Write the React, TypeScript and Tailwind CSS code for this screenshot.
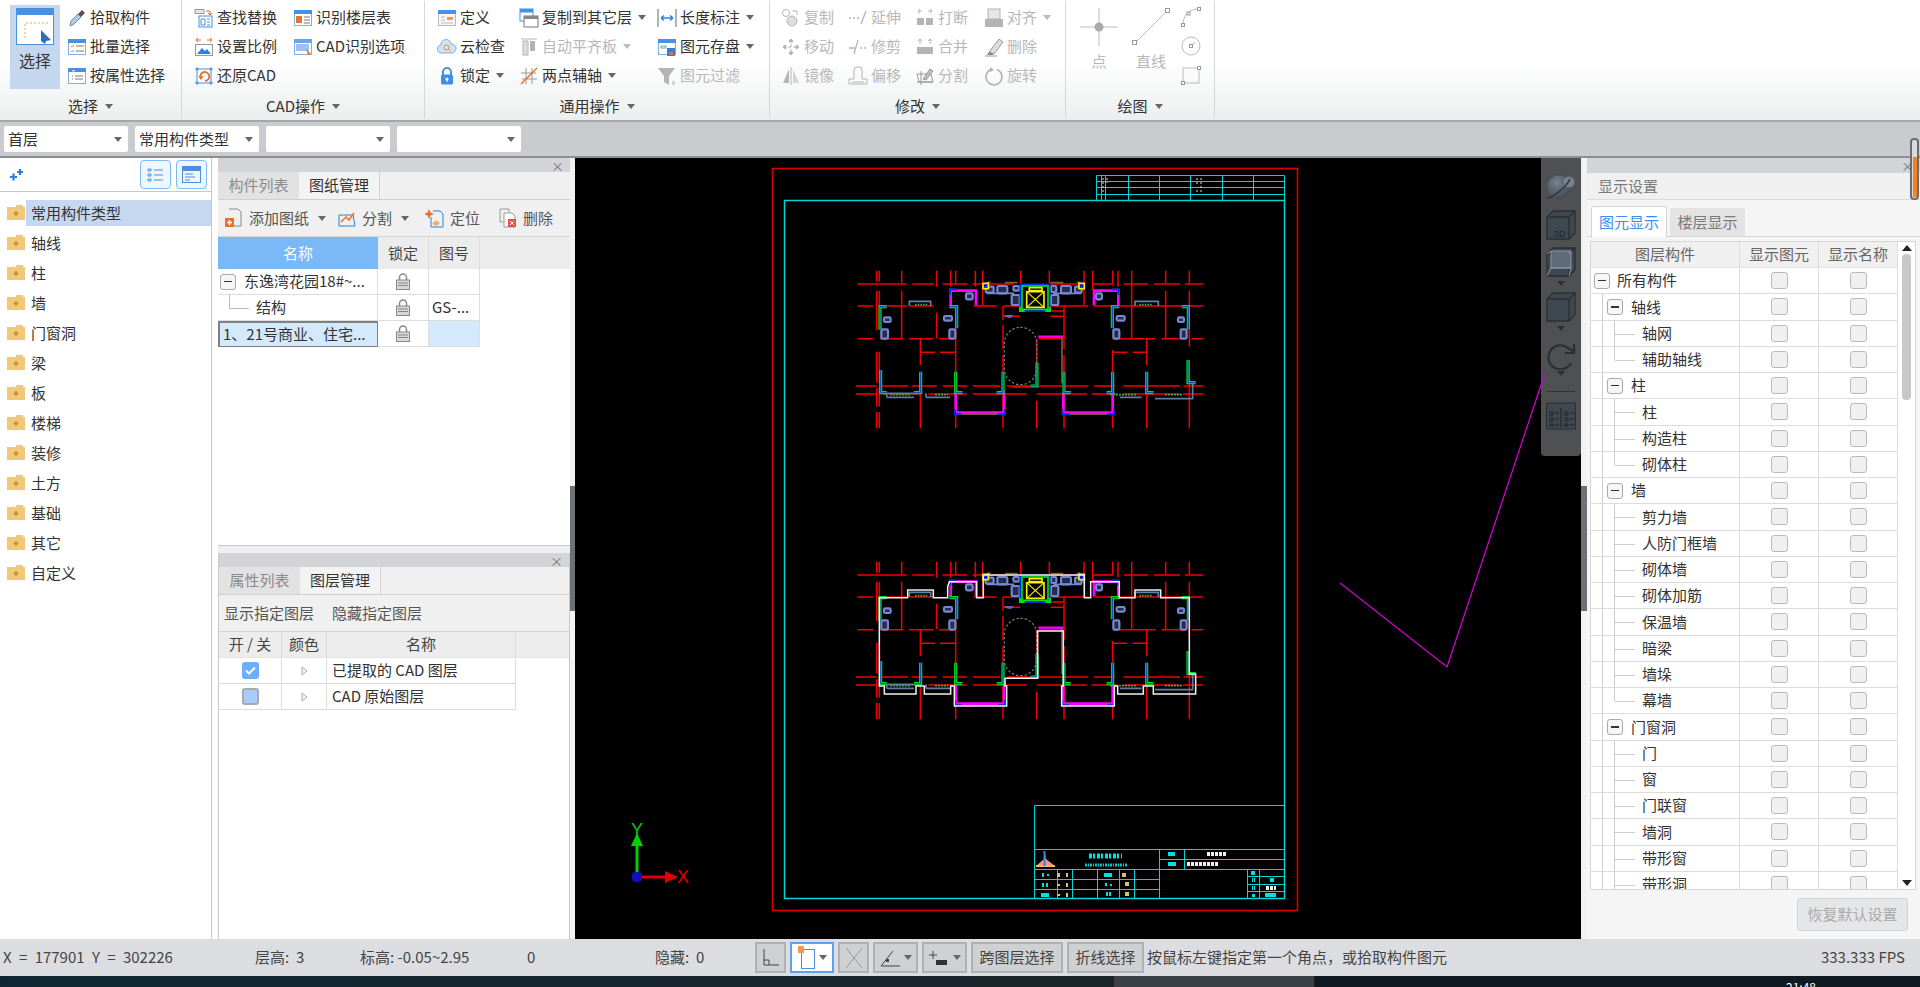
import React from 'react'

const Caret = ({ color = '#666' }: { color?: string }) => (
  <svg width="8" height="5" viewBox="0 0 8 5" className="shrink-0"><path d="M0 0h8L4 5z" fill={color} /></svg>
)

const S = ({ children, size = 20 }: { children: React.ReactNode; size?: number }) => (
  <svg width={size} height={size} viewBox="0 0 20 20" className="shrink-0" fill="none">{children}</svg>
)

const Win = ({ bar = '#4a90e2' }: { bar?: string }) => (
  <>
    <rect x="1.5" y="2.5" width="17" height="15" fill="#fff" stroke="#7fb0e6" />
    <rect x="1" y="2" width="18" height="4" fill={bar} />
  </>
)

const dis = '#b4b4b4'

const icons: Record<string, React.ReactNode> = {
  pick: <><path d="M3 18l1-5 7-7 3 3-7 7z" fill="#a9cdf2" stroke="#7d8b99" /><path d="M11 6l4-4 3 3-4 4z" fill="#555" /></>,
  batch: <><Win /><path d="M4 9l1 1 2-2M4 14l1 1 2-2" stroke="#e8912e" /><path d="M9 9h8M9 14h8" stroke="#777" /></>,
  prop: <><Win /><path d="M5 4h3l-1.500 2z" fill="#fff" /><path d="M5 10h1M5 13h1M8 10h8M8 13h8" stroke="#777" /></>,
  find: <><rect x="1" y="1.500" width="9" height="4" fill="#e5e5e5" stroke="#999" /><path d="M12 3h4v3m-2-1l2 2 2-2" stroke="#e8712e" /><rect x="5" y="8" width="13" height="11" fill="#fff" stroke="#4a90e2" /><path d="M7 11h4v6H7zM13 11h3M13 14h3M13 17h3" stroke="#4a90e2" /></>,
  scale: <><path d="M2 3h5M13 3h5M2 3l2-2M2 3l2 2M18 3l-2-2M18 3l-2 2" stroke="#e8712e" /><rect x="1.500" y="7.500" width="17" height="11" fill="#fff" stroke="#999" /><path d="M3 17l5-6 3 3 2-2 4 5z" fill="#2f7fd8" /></>,
  restore: <><rect x="3" y="3" width="14" height="14" stroke="#4a90e2" /><path d="M1 3h4M3 1v4M15 3h4M17 1v4M1 17h4M3 15v4M15 17h4M17 15v4" stroke="#4a90e2" /><path d="M7 13a4.500 4.500 0 1 1 4 2" stroke="#e8712e" strokeWidth="1.800" /><path d="M4.500 10h5l-2.500 4z" fill="#e8712e" /></>,
  floor: <><Win /><rect x="3" y="8" width="6" height="7" fill="#e8712e" /><path d="M11 9h6M11 12h6M11 15h6" stroke="#777" /></>,
  cad: <><Win bar="#6ba5e5" /><rect x="3" y="7" width="13" height="7" fill="#9cc3ee" /><path d="M13 12l5 5-3 1z" fill="#e8712e" /></>,
  define: <><rect x="1.500" y="2.500" width="17" height="15" fill="#f6f6f6" stroke="#bbb" /><rect x="1" y="2" width="18" height="4" fill="#4a90e2" /><rect x="10" y="9" width="6" height="3" fill="#f0a030" /><path d="M4 9h4M4 12h4M4 15h12" stroke="#bbb" /></>,
  cloud: <><path d="M5 16a4 4 0 0 1-1-8 5 5 0 0 1 10-1 4.500 4.500 0 0 1 1 9z" fill="#cfe2f7" stroke="#7fb0e6" /><circle cx="9.500" cy="10.500" r="2.500" stroke="#e8912e" /><path d="M11.500 12.500l2 1.500" stroke="#e8912e" /></>,
  lock: <><path d="M6 9V6a4 4 0 0 1 8 0v3" stroke="#4a90e2" strokeWidth="2" /><rect x="4" y="8.500" width="12" height="10" rx="1.500" fill="#3f8fe8" /><circle cx="10" cy="13" r="1.500" fill="#fff" /><path d="M10 13v3" stroke="#fff" /></>,
  copyFloor: <><rect x="1" y="1" width="13" height="12" fill="#fff" stroke="#4a90e2" /><rect x="1" y="1" width="13" height="3.500" fill="#4a90e2" /><rect x="5" y="8" width="14" height="11" fill="#fff" stroke="#777" /><rect x="5" y="8" width="14" height="3" fill="#888" /></>,
  align: <><path d="M2 2h16" stroke={dis} /><rect x="4" y="4" width="5" height="14" fill="#ddd" stroke={dis} /><rect x="11" y="4" width="5" height="10" fill={dis} /></>,
  twoPoint: <><path d="M2 7h15M3 13h15M7 2v16M13 2v16" stroke="#999" /><path d="M2 18L18 2" stroke="#e8712e" strokeWidth="1.500" /></>,
  length: <><path d="M1 1v18M19 1v18" stroke="#666" /><path d="M4 10h12M4 10l3-2.500M4 10l3 2.500M16 10l-3-2.500M16 10l-3 2.500" stroke="#2f7fd8" strokeWidth="1.300" /></>,
  store: <><Win /><rect x="4" y="9" width="5" height="2" stroke="#999" /><rect x="10" y="11" width="8" height="8" fill="#2f7fd8" /><rect x="12" y="15" width="4" height="3" fill="#e8712e" /></>,
  filter: <><path d="M1 2h17l-6 8v9l-5-3v-6z" fill={dis} /><path d="M15 16h3M15 18h3" stroke={dis} /></>,
  copy: <><circle cx="5" cy="5" r="3.500" stroke={dis} /><circle cx="11" cy="13" r="5" fill="#ddd" stroke={dis} /><path d="M11 3h5v4" stroke={dis} /></>,
  extend: <path d="M1 10h2M5 10h2M9 10h2M13 16l5-13" stroke={dis} strokeWidth="1.300" />,
  breakIt: <><path d="M3 3h4M13 3h4M5 1l-2 2 2 2M15 1l2 2-2 2" stroke={dis} /><rect x="2" y="10" width="7" height="7" fill={dis} /><rect x="11" y="10" width="7" height="7" fill={dis} /></>,
  alignR: <><rect x="4" y="1" width="12" height="10" fill="#e6e6e6" stroke={dis} /><rect x="1" y="11" width="18" height="8" fill={dis} /></>,
  move: <path d="M10 2v16M2 10h16M10 2L7.500 5h5zM10 18l-2.500-3h5zM2 10l3-2.500v5zM18 10l-3-2.500v5z" stroke={dis} fill={dis} strokeDasharray="3 2" />,
  trim: <path d="M1 11h6M10 3l-4 14M12 11h2M16 11h2" stroke={dis} strokeWidth="1.300" />,
  merge: <><path d="M5 2v5M15 2v5M3 4l2-2 2 2M13 4l2-2 2 2" stroke={dis} /><rect x="2" y="10" width="16" height="7" fill={dis} /></>,
  erase: <><path d="M5 15L15 2l4 3-9 12z" fill="#ddd" stroke="#999" /><path d="M5 15l5 2-2 1H3z" fill="#888" /><path d="M1 19h12" stroke="#999" /></>,
  mirror: <><path d="M8 3L2 17h6z" fill={dis} /><path d="M12 3l6 14h-6z" fill="#d5d5d5" /><path d="M10 1v18" stroke={dis} /></>,
  offset: <path d="M1 18v-5h5V4a3 3 0 0 1 3-3h2a3 3 0 0 1 3 3v9h5v5zM4 16h12M4 16" stroke={dis} />,
  split: <><path d="M2 8l14 0 2 8H4zM2 16h16M6 5v14" stroke="#999" /><path d="M8 13l7-10 3 2-7 9z" fill="#bbb" stroke="#999" /></>,
  rotate: <><path d="M13 3.500a8 8 0 1 1-6 0" stroke={dis} strokeWidth="1.500" /><path d="M6 1l4 3-4 2z" fill={dis} /></>,
}

type Item = { icon?: string; text?: string; off?: boolean; caret?: boolean }

const RibbonItem = ({ icon, text, off, caret, w }: Item & { w: string }) => (
  <div className={`flex h-[29px] items-center ${w}`}>
    {icon && <S>{icons[icon]}</S>}
    <span className={`ml-[3px] whitespace-nowrap text-[15px] ${off ? 'text-[#b8b8b8]' : 'text-[#333]'}`}>{text}</span>
    {caret && <span className="ml-[6px]"><Caret color={off ? '#bbb' : '#666'} /></span>}
  </div>
)

const ItemCol = ({ items, w }: { items: Item[]; w: string }) => (
  <div className={`flex flex-col ${w}`}>
    {items.map((it, i) => <RibbonItem key={i} {...it} w={w} />)}
  </div>
)

const RibbonGroup = ({ label, w, pl, children }: { label: string; w: string; pl: string; children: React.ReactNode }) => (
  <div className={`flex h-[117px] flex-col border-r border-[#d5d7d8] ${w}`}>
    <div className={`flex h-[93px] pt-[2px] ${pl}`}>{children}</div>
    <div className="flex h-[24px] items-center justify-center gap-[7px] text-[15px] text-[#333]">
      {label}
      <Caret />
    </div>
  </div>
)

const Ribbon = () => (
  <div className="flex h-[120px] bg-linear-to-b from-white from-50% to-[#eceeee] pt-[1px]">
    <RibbonGroup label="选择" w="w-[182px]" pl="pl-[10px]">
      <div className="mr-[7px] mt-[2px] flex h-[84px] w-[50px] flex-col items-center bg-[#c5d7ee] pt-[3px]">
        <svg width="38" height="38" viewBox="0 0 38 38">
          <rect x="0.500" y="0.500" width="37" height="36" fill="#fff" stroke="#4a90e2" />
          <rect width="38" height="7" fill="#4a90e2" />
          <path d="M9 30V15h24" stroke="#f2a93b" strokeDasharray="2 2" fill="none" />
          <path d="M25 22l10 10-5 1-1 3-4-3z" fill="#2f6fb7" />
        </svg>
        <span className="mt-[3px] text-[16px] leading-[22px] text-[#333]">选择</span>
      </div>
      <ItemCol w="w-[110px]" items={[{ icon: 'pick', text: '拾取构件' }, { icon: 'batch', text: '批量选择' }, { icon: 'prop', text: '按属性选择' }]} />
    </RibbonGroup>
    <RibbonGroup label="CAD操作" w="w-[243px]" pl="pl-[12px]">
      <ItemCol w="w-[99px]" items={[{ icon: 'find', text: '查找替换' }, { icon: 'scale', text: '设置比例' }, { icon: 'restore', text: '还原CAD' }]} />
      <ItemCol w="w-[125px]" items={[{ icon: 'floor', text: '识别楼层表' }, { icon: 'cad', text: 'CAD识别选项' }]} />
    </RibbonGroup>
    <RibbonGroup label="通用操作" w="w-[345px]" pl="pl-[12px]">
      <ItemCol w="w-[82px]" items={[{ icon: 'define', text: '定义' }, { icon: 'cloud', text: '云检查' }, { icon: 'lock', text: '锁定', caret: true }]} />
      <ItemCol w="w-[138px]" items={[{ icon: 'copyFloor', text: '复制到其它层', caret: true }, { icon: 'align', text: '自动平齐板', off: true, caret: true }, { icon: 'twoPoint', text: '两点辅轴', caret: true }]} />
      <ItemCol w="w-[105px]" items={[{ icon: 'length', text: '长度标注', caret: true }, { icon: 'store', text: '图元存盘', caret: true }, { icon: 'filter', text: '图元过滤', off: true }]} />
    </RibbonGroup>
    <RibbonGroup label="修改" w="w-[296px]" pl="pl-[11px]">
      <ItemCol w="w-[67px]" items={[{ icon: 'copy', text: '复制', off: true }, { icon: 'move', text: '移动', off: true }, { icon: 'mirror', text: '镜像', off: true }]} />
      <ItemCol w="w-[67px]" items={[{ icon: 'extend', text: '延伸', off: true }, { icon: 'trim', text: '修剪', off: true }, { icon: 'offset', text: '偏移', off: true }]} />
      <ItemCol w="w-[69px]" items={[{ icon: 'breakIt', text: '打断', off: true }, { icon: 'merge', text: '合并', off: true }, { icon: 'split', text: '分割', off: true }]} />
      <ItemCol w="w-[70px]" items={[{ icon: 'alignR', text: '对齐', off: true, caret: true }, { icon: 'erase', text: '删除', off: true }, { icon: 'rotate', text: '旋转', off: true }]} />
    </RibbonGroup>
    <RibbonGroup label="绘图" w="w-[149px]" pl="pl-[14px]">
      <div className="flex w-[52px] flex-col items-start text-[15px] text-[#b8b8b8]">
        <svg width="38" height="38" viewBox="0 0 38 38" className="mt-[5px]"><path d="M19 0v38M0 19h38" stroke="#bbb" /><circle cx="19" cy="19" r="4.500" fill="#aaa" /></svg>
        <span className="mt-[4px] w-[38px] text-center">点</span>
      </div>
      <div className="flex w-[49px] flex-col items-start text-[15px] text-[#b8b8b8]">
        <svg width="38" height="38" viewBox="0 0 38 38" className="mt-[5px]"><path d="M3 35L35 3" stroke="#bbb" /><rect x="0.500" y="32.500" width="4" height="4" fill="#fff" stroke="#999" /><rect x="33.500" y="0.500" width="4" height="4" fill="#fff" stroke="#999" /></svg>
        <span className="mt-[4px] w-[38px] whitespace-nowrap text-center">直线</span>
      </div>
      <div className="flex flex-col gap-[9px] pt-[4px]">
        <svg width="20" height="20" viewBox="0 0 20 20"><path d="M2 18C2 8 8 2 18 2" stroke="#bbb" fill="none" /><rect x="0.500" y="16.500" width="3" height="3" fill="#fff" stroke="#999" /><rect x="16.500" y="0.500" width="3" height="3" fill="#fff" stroke="#999" /><rect x="6" y="5" width="3" height="3" fill="#fff" stroke="#999" /></svg>
        <svg width="20" height="20" viewBox="0 0 20 20"><circle cx="10" cy="10" r="9" stroke="#bbb" fill="none" /><path d="M10 10l4-4" stroke="#bbb" /><rect x="8.500" y="8.500" width="3" height="3" fill="#fff" stroke="#999" /></svg>
        <svg width="20" height="20" viewBox="0 0 20 20"><rect x="2" y="3" width="16" height="15" stroke="#bbb" fill="none" /><rect x="0.500" y="16.500" width="3" height="3" fill="#fff" stroke="#999" /><rect x="16.500" y="1.500" width="3" height="3" fill="#fff" stroke="#999" /></svg>
      </div>
    </RibbonGroup>
  </div>
)

const Select = ({ value }: { value?: string }) => (
  <div className="flex h-[26px] w-[124px] items-center justify-between rounded-[2px] bg-white pl-[4px] pr-[6px] text-[15px] text-[#333]">
    <span className="whitespace-nowrap">{value}</span>
    <Caret />
  </div>
)

const FilterBar = () => (
  <div className="flex h-[38px] items-center gap-[7px] border-y-2 border-t-[#a5a7a9] border-b-[#8d8f91] bg-[#c9cbce] pl-[4px]">
    <Select value="首层" />
    <Select value="常用构件类型" />
    <Select />
    <Select />
  </div>
)

const Folder = () => (
  <svg width="18" height="16" viewBox="0 0 18 16" className="shrink-0">
    <path d="M9 0h7v2H9z" fill="#e8c98f" />
    <rect y="2" width="18" height="13" fill="#f0c878" />
    <path d="M9 6v5M6.500 8.500h5" stroke="#c58a2a" strokeWidth="1.500" />
  </svg>
)

const leftTree = ['常用构件类型', '轴线', '柱', '墙', '门窗洞', '梁', '板', '楼梯', '装修', '土方', '基础', '其它', '自定义']

const LeftPanel = () => (
  <div className="mr-[6px] flex w-[212px] flex-col border-r border-[#c8c8c8] bg-white">
    <div className="flex h-[34px] items-center border-b border-[#c8c8c8] pl-[8px] pr-[4px]">
      <svg width="16" height="14" viewBox="0 0 16 14"><path d="M2 9h7M5.500 5.500v7M9 4h6M12 1v6" stroke="#2f7fd8" strokeWidth="2.200" /></svg>
      <button className="ml-auto flex h-[29px] w-[31px] items-center justify-center rounded-[4px] border border-[#7fbaf5] bg-[#eef6fe]">
        <svg width="17" height="16" viewBox="0 0 17 16" fill="none" stroke="#4a90e2"><path d="M1 2h3v2H1zM1 7h3v2H1zM1 12h3v2H1zM7 3h9M7 8h9M7 13h9" /></svg>
      </button>
      <button className="ml-[5px] flex h-[29px] w-[31px] items-center justify-center rounded-[4px] border border-[#7fbaf5] bg-[#eef6fe]">
        <svg width="19" height="17" viewBox="0 0 19 17" fill="none"><rect x="0.500" y="0.500" width="18" height="16" stroke="#4a90e2" /><rect width="19" height="5" fill="#4a90e2" /><path d="M3 8h8M3 11h10M3 14h5" stroke="#4a90e2" /></svg>
      </button>
    </div>
    <div className="flex flex-col pt-[6px]">
      {leftTree.map((t, i) => (
        <div key={t} className="flex h-[30px] items-center gap-[1px] pl-[7px] text-[15px] text-[#333]">
          <Folder />
          <span className={`flex h-[26px] flex-1 items-center pl-[5px] ${i === 0 ? 'bg-[#c6d8ef]' : ''}`}>{t}</span>
        </div>
      ))}
    </div>
  </div>
)

const PanelTop = ({ tabs }: { tabs: [string, string] }) => (
  <>
    <div className="flex h-[14px] items-center justify-end bg-[#d2d4d7] pr-[6px] text-[13px] leading-none text-[#777]">×</div>
    <div className="flex h-[28px] border-b border-[#d0d0d0] bg-[#f0f0f0] text-[15px]">
      <div className="flex w-[81px] items-center justify-center bg-[#e2e2e2] text-[#8a8a8a]">{tabs[0]}</div>
      <div className="flex w-[81px] items-center justify-center border-r border-[#d0d0d0] bg-[#f3f3f3] text-[#333]">{tabs[1]}</div>
    </div>
  </>
)

const LockIcon = () => (
  <svg width="14" height="17" viewBox="0 0 14 17" fill="none">
    <path d="M3.500 7V4.500a3.500 3.500 0 0 1 7 0V7" stroke="#888" strokeWidth="1.500" />
    <rect x="0.500" y="7" width="13" height="9.500" fill="#d8d8d8" stroke="#888" />
    <path d="M2 10h10M2 12.500h10" stroke="#888" />
  </svg>
)

const MinusBox = () => (
  <span className="flex h-[16px] w-[16px] shrink-0 items-center justify-center rounded-[3px] border border-[#aaa] bg-[#f6f6f6]">
    <span className="h-[1.500px] w-[8px] bg-[#333]" />
  </span>
)

const DrawingRow = ({ name, no, kind }: { name: React.ReactNode; no?: string; kind: 'root' | 'child' | 'sel' }) => (
  <div className="flex h-[26px] text-[15px] text-[#333]">
    <div className={`flex w-[160px] items-center overflow-hidden whitespace-nowrap border-b border-r ${kind === 'sel' ? 'border-2 border-[#808080] bg-[#d5e9fc] pl-[3px]' : 'border-[#ddd]'} ${kind === 'root' ? 'pl-[2px]' : ''} ${kind === 'child' ? 'relative pl-[38px]' : ''}`}>
      {kind === 'child' && <span className="absolute left-[11px] top-0 h-[14px] w-[20px] border-b border-l border-[#bbb]" />}
      {kind === 'root' && <span className="mr-[8px]"><MinusBox /></span>}
      {name}
    </div>
    <div className="flex w-[51px] items-center justify-center border-b border-r border-[#ddd]"><LockIcon /></div>
    <div className={`flex w-[51px] items-center overflow-hidden whitespace-nowrap border-b border-r border-[#ddd] pl-[3px] ${kind === 'sel' ? 'bg-[#d5e9fc]' : ''}`}>{no}</div>
  </div>
)

const ToolBtn = ({ children, label, caret }: { children: React.ReactNode; label: string; caret?: boolean }) => (
  <div className="flex items-center gap-[5px] text-[15px] text-[#555]">
    {children}
    <span className="whitespace-nowrap">{label}</span>
    {caret && <span className="ml-[4px]"><Caret /></span>}
  </div>
)

const MiddlePanels = () => (
  <div className="flex w-[352px] flex-col gap-[7px] bg-[#efefef]">
    <div className="flex h-[388px] flex-col border-b border-[#c8c8c8] bg-white">
      <PanelTop tabs={['构件列表', '图纸管理']} />
      <div className="flex h-[37px] items-center border-b border-[#d5d5d5] bg-[#f0f0f0] pl-[6px]">
        <ToolBtn label="添加图纸" caret>
          <S><path d="M5 1h9l3 3v14H8" stroke="#888" /><rect x="1" y="10" width="9" height="9" fill="#e8712e" /><path d="M5.500 12v5M3 14.500h5" stroke="#fff" strokeWidth="1.500" /></S>
        </ToolBtn>
        <span className="ml-[11px]" />
        <ToolBtn label="分割" caret>
          <S><path d="M2 7h14l2 11H2z" stroke="#2f7fd8" /><path d="M4 14l5-5 3 3 5-7" stroke="#e8712e" strokeWidth="1.500" /></S>
        </ToolBtn>
        <span className="ml-[16px]" />
        <ToolBtn label="定位">
          <S><path d="M8 3h7l3 3v13H6V9" stroke="#2f7fd8" /><path d="M4 1l1.500 3.500L9 6 5.500 7.500 4 11 2.500 7.500-1 6l3.500-1.500z" fill="#e8712e" /><path d="M7 16l4-4 4 3-3 3z" fill="#f0b070" /></S>
        </ToolBtn>
        <span className="ml-[18px]" />
        <ToolBtn label="删除">
          <S><path d="M2 1h9v3M2 1v13h3" stroke="#999" /><path d="M6 5h8l3 3v11H6z" stroke="#999" fill="#fff" /><rect x="10" y="11" width="8" height="8" fill="#e25050" /><path d="M12 13l4 4M16 13l-4 4" stroke="#fff" /></S>
        </ToolBtn>
      </div>
      <div className="flex h-[32px] bg-[#ececec] text-[15px] text-[#444]">
        <div className="flex w-[160px] items-center justify-center bg-[#7ab8f7] text-white">名称</div>
        <div className="flex w-[51px] items-center justify-center border-r border-[#ddd]">锁定</div>
        <div className="flex w-[51px] items-center justify-center border-r border-[#ddd]">图号</div>
      </div>
      <DrawingRow kind="root" name="东逸湾花园18#~..." />
      <DrawingRow kind="child" name="结构" no="GS-..." />
      <DrawingRow kind="sel" name="1、21号商业、住宅..." />
    </div>
    <div className="flex flex-1 flex-col border-x border-[#c8c8c8] bg-white">
      <PanelTop tabs={['属性列表', '图层管理']} />
      <div className="flex h-[37px] items-center gap-[18px] border-b border-[#d5d5d5] bg-[#f0f0f0] pl-[5px] text-[15px] text-[#555]">
        <span>显示指定图层</span>
        <span>隐藏指定图层</span>
      </div>
      <div className="flex h-[26px] border-b border-[#e5e5e5] bg-[#ececec] text-[15px] text-[#444]">
        <div className="flex w-[63px] items-center justify-center border-r border-[#ddd]">开 / 关</div>
        <div className="flex w-[45px] items-center justify-center border-r border-[#ddd]">颜色</div>
        <div className="flex w-[189px] items-center justify-center border-r border-[#ddd]">名称</div>
      </div>
      {[{ name: '已提取的 CAD 图层', on: true }, { name: 'CAD 原始图层', on: false }].map((r) => (
        <div key={r.name} className="flex h-[26px] text-[15px] text-[#333]">
          <div className="flex w-[63px] items-center justify-center border-b border-r border-[#ddd]">
            {r.on ? (
              <span className="flex h-[17px] w-[17px] items-center justify-center rounded-[3px] bg-[#6aaefc]">
                <svg width="11" height="9" viewBox="0 0 11 9"><path d="M1 4.500l3 3 6-6" stroke="#fff" strokeWidth="2" fill="none" /></svg>
              </span>
            ) : (
              <span className="h-[17px] w-[17px] rounded-[3px] border-2 border-[#aaa] bg-[#a9cdfb]" />
            )}
          </div>
          <div className="flex w-[45px] items-center justify-center border-b border-r border-[#ddd]">
            <svg width="7" height="10" viewBox="0 0 7 10"><path d="M1 1l5 4-5 4z" fill="#f5f5f5" stroke="#aaa" /></svg>
          </div>
          <div className="flex w-[189px] items-center whitespace-nowrap border-b border-r border-[#ddd] pl-[5px]">{r.name}</div>
        </div>
      ))}
    </div>
  </div>
)

const Splitter = ({ w }: { w: string }) => (
  <div className={`flex ${w} items-center bg-[#f2f2f2]`}>
    <div className="h-[125px] w-full bg-[#6d7175]" />
  </div>
)

const segs = (rows: [number, [number, number][]][], horiz: boolean) =>
  rows.map(([p, parts]) => parts.map(([a, b]) => (horiz ? `M${a} ${p}H${b}` : `M${p} ${a}V${b}`)).join('')).join('')

const redH = segs([
  [102, [[52, 200], [217, 282], [308, 382], [398, 520], [630, 730], [760, 822], [852, 925], [942, 1020], [1035, 1090]]],
  [168, [[52, 100], [118, 200], [210, 280], [400, 470], [490, 540], [630, 745], [760, 1090]]],
  [266, [[52, 100], [120, 190], [207, 280], [297, 340], [596, 668], [818, 945], [965, 1035], [1055, 1090]]],
  [307, [[241, 285], [300, 347], [818, 862], [878, 920]]],
  [408, [[48, 110], [125, 205], [215, 290], [308, 382], [398, 480], [500, 575], [595, 745], [762, 825], [850, 1020], [1030, 1090]]],
  [432, [[48, 110], [125, 240], [265, 380], [398, 560], [590, 740], [755, 830], [850, 1020], [1030, 1090]]],
], true)

const redV = segs([
  [110, [[62, 95], [122, 240], [305, 398], [415, 470], [486, 535]]],
  [118, [[62, 95], [122, 240], [305, 398], [415, 470], [486, 535]]],
  [185, [[62, 100], [122, 265]]],
  [290, [[62, 110], [188, 265]]],
  [332, [[62, 110]]],
  [347, [[62, 100], [170, 535]]],
  [406, [[62, 110]]],
  [428, [[62, 165]]],
  [542, [[62, 100]]],
  [628, [[62, 100]]],
  [732, [[62, 165]]],
  [758, [[62, 120]]],
  [818, [[62, 100], [300, 535]]],
  [834, [[62, 110]]],
  [875, [[62, 265]]],
  [977, [[62, 100], [122, 265]]],
  [1048, [[62, 100], [122, 290], [330, 535]]],
  [241, [[266, 345], [432, 535]]],
  [489, [[168, 210], [225, 298], [315, 535]]],
  [590, [[266, 408], [452, 535]]],
  [672, [[168, 298], [315, 535]]],
  [920, [[266, 345], [432, 535]]],
], false)

const walls = [
  '120,238 120,170 140,170', '350,235 350,170 328,170', '1045,238 1045,170 1025,170', '817,235 817,170 838,170',
  '122,360 122,428 140,428', '242,365 242,428 222,428', '347,365 347,428 367,428', '489,365 489,428 470,428',
  '591,338 591,408 572,408', '672,365 672,428 692,428', '818,365 818,428 800,428', '920,365 920,428 940,428',
  '1044,330 1044,398 1067,398',
]

const magenta = [
  '332,165 332,122 408,122 408,165', '762,165 762,122 835,122 835,165', '595,260 670,260',
  '347,430 347,488 492,488 492,420', '670,430 670,488 818,488 818,430',
]

const corners = [
  '330,135 330,118 350,118', '815,118 835,118 835,135', '345,478 345,493 365,493', '475,493 495,493 495,478',
  '667,478 667,493 687,493', '802,493 822,493 822,478',
]

const furniture = [
  [437, 110, 24, 18], [472, 108, 30, 22], [520, 108, 18, 14], [515, 135, 24, 30], [633, 108, 16, 18], [633, 135, 22, 30],
  [663, 108, 30, 22], [705, 110, 20, 18], [378, 130, 20, 18], [768, 130, 18, 18],
  [132, 202, 20, 14], [312, 198, 24, 14], [830, 198, 24, 14], [1014, 202, 18, 14],
  [124, 238, 20, 28], [328, 238, 18, 28], [820, 238, 18, 28], [1022, 238, 18, 28],
]

const Plan = () => (
  <>
    <path d={redH} stroke="#f00000" strokeWidth="4.500" fill="none" />
    <path d={redV} stroke="#f00000" strokeWidth="4.500" fill="none" />
    <path d="M632 183h40M632 199h40M490 199h50M515 411h58" stroke="#f00000" strokeWidth="4.500" />
    <path d="M666 262V400" stroke="#a06a60" strokeWidth="4" />
    <path d="M365 492H475M688 492H802" stroke="#a06a60" strokeWidth="4" />
    {furniture.map(([x, y, w, h], i) => (
      <rect key={i} x={x} y={y} width={w} height={h} rx="4" fill="#7082c8" fillOpacity="0.35" stroke="#7588d4" strokeWidth="6.500" />
    ))}
    <path d="M440 130H520V135M640 130H725" stroke="#7588d4" strokeWidth="5" fill="none" />
    <path d="M493 195h28l-4 7-8 2-10-2z" fill="#7a58c0" />
    <path d="M440 98l12-2M495 98h38M632 98h38M710 98l12-2" stroke="#806020" strokeWidth="5" />
    <path d="M208 168v-14h64v14M885 168v-14h70v14" stroke="#5e84a8" strokeWidth="5" fill="none" />
    <path d="M225 164h40M898 164h40" stroke="#3fa050" strokeWidth="5" strokeDasharray="5 3" />
    <path d="M140 442V430H222M140 442H222M258 442H330M258 430V442M840 442H905M945 446H1058V400" stroke="#5e7ea0" strokeWidth="5" fill="none" />
    <path d="M150 434h60M285 434h40M810 434h80M975 434h55" stroke="#3fa050" strokeWidth="5" strokeDasharray="6 3" />
    {magenta.map((p) => <polyline key={p} points={p} fill="none" stroke="#ff00ff" strokeWidth={p === '595,260 670,260' ? 7 : 8} />)}
    {corners.map((p) => <polyline key={p} points={p} fill="none" stroke="#0030e0" strokeWidth="6" />)}
    {walls.map((p) => (
      <g key={p}>
        <polyline points={p} fill="none" stroke="#00e020" strokeWidth="9.500" />
        <polyline points={p} fill="none" stroke="#0a3ad0" strokeWidth="3" />
      </g>
    ))}
    <rect x="541" y="103" width="88" height="80" fill="none" stroke="#0030e0" strokeWidth="5" />
    <rect x="546" y="108" width="78" height="70" fill="none" stroke="#00e020" strokeWidth="5" />
    <path d="M540 170v13h14M630 170v13h-14" stroke="#00e020" strokeWidth="6" fill="none" />
    <rect x="560" y="125" width="52" height="47" fill="none" stroke="#ffee00" strokeWidth="5" />
    <path d="M560 125l52 47M612 125l-52 47" stroke="#ffee00" strokeWidth="3.500" />
    <rect x="568" y="113" width="38" height="9" fill="none" stroke="#ffee00" strokeWidth="5" />
    <rect x="429" y="100" width="16" height="16" fill="#0020e0" stroke="#ffee00" strokeWidth="5" />
    <rect x="717" y="100" width="16" height="16" fill="#0020e0" stroke="#ffee00" strokeWidth="5" />
    <rect x="493" y="232" width="97" height="172" rx="48" fill="none" stroke="#808080" strokeWidth="3.500" strokeDasharray="7 6" />
  </>
)

const outline = '118,143 203,143 203,120 280,120 280,143 323,143 323,110 328,95 410,95 410,143 430,143 430,75 733,75 733,143 752,143 752,95 838,95 838,143 885,143 885,120 962,120 962,143 1048,143 1048,372 1067,372 1067,432 940,432 940,408 910,408 910,432 833,432 833,408 823,408 823,468 665,468 665,408 670,408 670,243 593,243 593,385 495,385 495,408 500,408 500,468 343,468 343,408 332,408 332,432 253,432 253,408 228,408 228,432 133,432 133,408 118,408'

const TitleMarks = ({ rects, fill }: { rects: number[][]; fill: string }) => (
  <>{rects.map(([x, y, w, h], i) => <rect key={i} x={x} y={y} width={w} height={h} fill={fill} />)}</>
)

const Sheet = () => (
  <svg className="absolute left-0 top-0 z-10" width="1006" height="781" viewBox="575 158 1006 781">
    <rect x="772.500" y="168.500" width="525" height="742" fill="none" stroke="#d80000" strokeWidth="1.600" />
    <rect x="784.500" y="200.500" width="500" height="698" fill="none" stroke="#00d4d4" strokeWidth="1.500" />
    <path d="M1096.500 175.500H1284.500V200M1096.500 175.500V200M1096 181.500H1284M1096 187.500H1284M1096 194.500H1284M1101.500 175V200M1105.500 175V200M1128.500 175V200M1159.500 175V200M1190.500 175V200M1222.500 175V200M1253.500 175V200" stroke="#00d4d4" fill="none" />
    <path d="M1103 178v16M1107 178v5M1197 178v6M1201 178v16M1197 190v4" stroke="#dddddd" strokeDasharray="2 2" />
    <path d="M1034.500 899V805.500H1284M1034 849.500H1284M1159.500 849V899M1184.500 849V869M1159 859.500H1284M1034 869.500H1284M1057.500 869V899M1072.500 869V899M1097.500 869V899M1119.500 869V899M1134.500 869V899M1034 879.500H1159M1034 889.500H1159M1247.500 869V899M1259.500 869V899M1247 876.500H1284M1247 884.500H1284M1247 891.500H1284" stroke="#00d4d4" fill="none" />
    <path d="M1036 866l8-7 1-6 1 6 9 7z" fill="#ff8a8a" />
    <path d="M1036 866h19" stroke="#e8c060" strokeWidth="2" />
    <path d="M1044.500 851v15" stroke="#1890e0" strokeWidth="2" />
    <path d="M1089 856H1122" stroke="#00e0e0" strokeWidth="5" strokeDasharray="3 1 2 2" />
    <path d="M1085 865H1127" stroke="#00c8c8" strokeWidth="3" strokeDasharray="2 1 1 1" />
    <TitleMarks fill="#00e0e0" rects={[[1168, 852, 7, 4], [1168, 862, 8, 4], [1042, 873, 2, 4], [1047, 874, 2, 2], [1042, 883, 2, 4], [1046, 883, 2, 4], [1041, 893, 8, 4], [1104, 873, 8, 4], [1105, 883, 2, 3], [1110, 884, 2, 2], [1106, 892, 2, 4], [1109, 892, 2, 4], [1251, 871, 4, 4], [1252, 878, 1, 4], [1254, 878, 1, 4], [1252, 886, 1, 4], [1254, 886, 1, 4], [1252, 894, 3, 3], [1270, 878, 4, 4], [1265, 893, 11, 4]]} />
    <TitleMarks fill="#d8c070" rects={[[1057, 873, 3, 4], [1066, 873, 2, 4], [1057, 884, 3, 2], [1066, 883, 2, 4], [1057, 894, 3, 2], [1066, 893, 2, 4], [1122, 873, 4, 4], [1125, 882, 4, 4], [1125, 892, 4, 4]]} />
    <path d="M1207 854H1227M1187 864H1219M1266 888H1276" stroke="#f0f0f0" strokeWidth="4" strokeDasharray="3 1" />

    <g transform="translate(840 250) scale(0.33333)"><Plan /></g>
    <g transform="translate(840 541) scale(0.33333)"><Plan /></g>
    <g transform="translate(840 550) scale(0.33333)">
      <polygon points={outline} fill="none" stroke="#f0f0f0" strokeWidth="4.500" />
    </g>

    <polyline points="1340,583 1447,667 1545,373" fill="none" stroke="#d000d0" strokeWidth="1.300" />

    <path d="M637 877V843" stroke="#00d000" strokeWidth="3" />
    <path d="M631 846l6-13 6 13z" fill="#00d000" />
    <path d="M637 877H668" stroke="#e00000" strokeWidth="3" />
    <path d="M665 871l13 6-13 6z" fill="#e00000" />
    <rect x="632" y="872" width="10" height="10" rx="4" fill="#1010c0" />
    <text x="631" y="836" fill="#00d000" fontSize="18" fontFamily="Liberation Sans, sans-serif">Y</text>
    <text x="677" y="883" fill="#e00000" fontSize="18" fontFamily="Liberation Sans, sans-serif">X</text>
  </svg>
)

const cubeFace = '#3f4751'
const cubeLine = '#2b2e33'

const Cube = ({ inner, label }: { inner?: boolean; label?: boolean }) => (
  <svg width="30" height="30" viewBox="0 0 30 30">
    <path d="M1 7l6-6h22v22l-6 6H1z" fill={cubeFace} stroke={cubeLine} strokeWidth="1.300" />
    <path d="M1 7h22v22M23 7l6-6" stroke={cubeLine} strokeWidth="1.300" fill="none" />
    {inner && <path d="M5 4h20v17H5z" fill="#5f6b78" stroke="#8a96a2" />}
    {inner && <path d="M1 7l4-3M23 7l2-3M1 29l4-8h20l-2 8" stroke="#8a96a2" fill="none" />}
    {label && <text x="8" y="27" fontSize="9" fill="#20242a" fontFamily="Liberation Sans, sans-serif">3D</text>}
  </svg>
)

const ViewTools = () => (
  <div className="absolute right-0 top-0 flex h-[298px] w-[40px] flex-col items-center rounded-b-[4px] bg-[#4f5052] pt-[13px]">
    <svg width="30" height="30" viewBox="0 0 30 30">
      <defs>
        <radialGradient id="planet" cx="0.4" cy="0.3" r="0.8">
          <stop offset="0" stopColor="#77828e" />
          <stop offset="1" stopColor="#3c444e" />
        </radialGradient>
      </defs>
      <circle cx="13" cy="16" r="11.500" fill="url(#planet)" />
      <circle cx="23" cy="11" r="5.500" fill="#77808b" />
      <path d="M1 27C6 27 20 17 24 8" stroke="#30353b" strokeWidth="1.500" fill="none" />
    </svg>
    <div className="mt-[9px] flex flex-col items-center">
      <Cube label />
    </div>
    <div className="mt-[7px]"><Cube inner /></div>
    <div className="mt-[4px]"><Caret color="#2b2e33" /></div>
    <div className="mt-[6px]"><Cube /></div>
    <div className="mt-[4px]"><Caret color="#2b2e33" /></div>
    <svg width="30" height="28" viewBox="0 0 30 28" className="mt-[11px]">
      <path d="M25 21A12 12 0 1 1 22 6l5 3" stroke="#2b2e33" strokeWidth="2.200" fill="none" />
      <path d="M28 2v9h-9" stroke="#2b2e33" strokeWidth="2.200" fill="none" />
    </svg>
    <div className="mt-[1px]"><Caret color="#2b2e33" /></div>
    <div className="mt-[15px] h-px w-[28px] bg-[#2f3236]" />
    <svg width="30" height="29" viewBox="0 0 30 29" className="mt-[9px]">
      <rect x="0.500" y="2" width="29" height="26" fill={cubeFace} stroke={cubeLine} />
      <path d="M15 7v19M4 11h3v3H4zM4 17h3v3H4zM4 23h3v2H4zM19 11h3v3h-3zM19 17h3v3h-3zM19 23h3v2h-3zM9 12h4M9 18h4M9 24h4M24 12h4M24 18h4M24 24h4" stroke="#20242a" fill="none" />
    </svg>
  </div>
)

const Canvas = () => (
  <div className="relative w-[1006px] overflow-hidden bg-black">
    <ViewTools />
    <Sheet />
  </div>
)

type Node = { t: string; lv: 0 | 1 | 2; last?: boolean }

const nodes: Node[] = [
  { t: '所有构件', lv: 0 }, { t: '轴线', lv: 1 }, { t: '轴网', lv: 2 }, { t: '辅助轴线', lv: 2, last: true },
  { t: '柱', lv: 1 }, { t: '柱', lv: 2 }, { t: '构造柱', lv: 2 }, { t: '砌体柱', lv: 2, last: true },
  { t: '墙', lv: 1 }, { t: '剪力墙', lv: 2 }, { t: '人防门框墙', lv: 2 }, { t: '砌体墙', lv: 2 }, { t: '砌体加筋', lv: 2 },
  { t: '保温墙', lv: 2 }, { t: '暗梁', lv: 2 }, { t: '墙垛', lv: 2 }, { t: '幕墙', lv: 2, last: true },
  { t: '门窗洞', lv: 1 }, { t: '门', lv: 2 }, { t: '窗', lv: 2 }, { t: '门联窗', lv: 2 }, { t: '墙洞', lv: 2 }, { t: '带形窗', lv: 2 }, { t: '带形洞', lv: 2 },
]

const Check = () => <span className="h-[17px] w-[17px] rounded-[3px] border border-[#bbb] bg-[#f0f0f0]" />

const LayerRow = ({ n }: { n: Node }) => (
  <div className="flex h-[26.250px] shrink-0 text-[15px] text-[#333]">
    <div className="relative flex w-[149px] items-center border-b border-r border-[#dcdcdc]">
      {n.lv > 0 && <span className="absolute bottom-0 left-[11px] top-0 w-px bg-[#ccc]" />}
      {n.lv === 2 && <span className={`absolute left-[23px] top-0 w-px bg-[#ccc] ${n.last ? 'h-[13px]' : 'bottom-0'}`} />}
      {n.lv === 2 && <span className="absolute left-[24px] top-[13px] h-px w-[20px] bg-[#ccc]" />}
      {n.lv === 0 && <span className="ml-[3px] mr-[7px]"><MinusBox /></span>}
      {n.lv === 1 && <span className="z-10 ml-[16px] mr-[8px]"><MinusBox /></span>}
      {n.lv === 2 && <span className="ml-[51px]" />}
      {n.t}
    </div>
    <div className="flex w-[79px] items-center justify-center border-b border-r border-[#dcdcdc]"><Check /></div>
    <div className="flex w-[79px] items-center justify-center border-b border-r border-[#dcdcdc]"><Check /></div>
  </div>
)

const RightPanel = () => (
  <div className="relative flex w-[333px] flex-col bg-[#f5f5f5]">
    <div className="flex h-[15px] items-center justify-end bg-[#d2d4d7] pr-[6px] text-[13px] leading-none text-[#777]">×</div>
    <div className="flex h-[27px] items-center border-b border-[#dadada] bg-[#f0f0f0] pl-[11px] text-[15px] text-[#7a7a7a]">显示设置</div>
    <div className="flex h-[37px] items-end gap-[3px] border-b border-[#d5d5d5] pl-[4px] text-[15px]">
      <div className="-mb-px flex h-[31px] w-[76px] items-center justify-center rounded-t-[3px] border border-b-0 border-[#d5d5d5] bg-white text-[#3f8fe8]">图元显示</div>
      <div className="flex h-[28px] w-[75px] items-center justify-center rounded-t-[3px] bg-[#e3e3e3] text-[#7a7a7a]">楼层显示</div>
    </div>
    <div className="ml-[3px] mr-[4px] mt-[4px] flex h-[649px] overflow-hidden border border-[#d5d5d5] bg-white">
      <div className="flex w-[307px] flex-col overflow-hidden">
        <div className="flex h-[26px] shrink-0 border-b border-[#e5e5e5] bg-[#f0f0f0] text-[15px] text-[#666]">
          <div className="flex w-[149px] items-center justify-center border-r border-[#dcdcdc]">图层构件</div>
          <div className="flex w-[79px] items-center justify-center border-r border-[#dcdcdc]">显示图元</div>
          <div className="flex w-[79px] items-center justify-center border-r border-[#dcdcdc]">显示名称</div>
        </div>
        {nodes.map((n, i) => <LayerRow key={i} n={n} />)}
      </div>
      <div className="flex flex-1 flex-col items-center pt-[3px]">
        <svg width="10" height="6" viewBox="0 0 10 6"><path d="M0 6h10L5 0z" fill="#222" /></svg>
        <div className="mt-[3px] h-[146px] w-[9px] rounded-[4px] bg-[#c8c8c8]" />
        <svg width="10" height="6" viewBox="0 0 10 6" className="mb-[3px] mt-auto"><path d="M0 0h10L5 6z" fill="#222" /></svg>
      </div>
    </div>
    <div className="mr-[12px] mt-[8px] flex justify-end">
      <div className="flex h-[33px] w-[111px] items-center justify-center rounded-[3px] border border-[#cfd4da] bg-[#e5e6e8] text-[15px] text-[#aaa]">恢复默认设置</div>
    </div>
  </div>
)

const BarBtn = ({ w, active, children }: { w: string; active?: boolean; children: React.ReactNode }) => (
  <div className={`flex h-[31px] ${w} items-center justify-center gap-[3px] whitespace-nowrap border-2 text-[15px] text-[#444] ${active ? 'border-[#5aa2ee] bg-white' : 'border-[#b0b1b3] bg-[#cfd0d2]'}`}>
    {children}
  </div>
)

const StatusBar = () => (
  <div className="flex h-[37px] items-center bg-[#dcdde0] text-[15px] text-[#444]">
    <span className="w-[255px] whitespace-nowrap pl-[3px] [word-spacing:4px]">X = 177901 Y = 302226</span>
    <span className="w-[105px] whitespace-nowrap">层高:&nbsp;&nbsp;3</span>
    <span className="w-[167px] whitespace-nowrap">标高: -0.05~2.95</span>
    <span className="w-[128px]">0</span>
    <span className="w-[100px] whitespace-nowrap">隐藏:&nbsp;&nbsp;0</span>
    <div className="flex items-center gap-[4px]">
      <BarBtn w="w-[31px]">
        <svg width="18" height="20" viewBox="0 0 18 20" fill="none"><path d="M2 1v16h15M2 12h5v5" stroke="#444" /></svg>
      </BarBtn>
      <BarBtn w="w-[44px]" active>
        <svg width="18" height="24" viewBox="0 0 18 24" fill="none"><rect x="3.500" y="3.500" width="13" height="19" stroke="#4a90e2" /><rect x="0" y="0" width="6" height="7" fill="#f09a50" /></svg>
        <Caret />
      </BarBtn>
      <BarBtn w="w-[31px]">
        <svg width="20" height="22" viewBox="0 0 20 22" fill="none"><path d="M2 1l16 20M18 1L2 21" stroke="#999" /></svg>
      </BarBtn>
      <BarBtn w="w-[45px]">
        <svg width="22" height="20" viewBox="0 0 22 20" fill="none"><path d="M2 18h19M2 18L14 3" stroke="#444" /><rect x="7" y="11" width="3" height="3" fill="#444" /></svg>
        <Caret />
      </BarBtn>
      <BarBtn w="w-[45px]">
        <svg width="22" height="20" viewBox="0 0 22 20" fill="none"><path d="M5 3v8M1 7h8" stroke="#444" /><rect x="8" y="12" width="11" height="5" fill="#333" /></svg>
        <Caret />
      </BarBtn>
      <BarBtn w="w-[92px]">跨图层选择</BarBtn>
      <BarBtn w="w-[77px]">折线选择</BarBtn>
    </div>
    <span className="ml-[3px] whitespace-nowrap">按鼠标左键指定第一个角点，或拾取构件图元</span>
    <span className="ml-auto whitespace-nowrap pr-[15px]">333.333 FPS</span>
  </div>
)

const Taskbar = () => (
  <div className="flex h-[11px] overflow-hidden bg-[#0e2430]">
    <div className="w-[1114px] bg-linear-to-r from-[#0c2733] to-[#1b2429]" />
    <div className="w-[200px] bg-[#3c4146]" />
    <div className="flex flex-1 bg-[#101a22] pl-[472px]">
      <span className="mt-[5px] text-[12px] leading-none text-white">21:48</span>
    </div>
  </div>
)

export default function App() {
  return (
    <div className="relative flex h-[987px] w-[1920px] flex-col overflow-hidden bg-white font-['Noto_Sans_CJK_SC','Liberation_Sans',sans-serif] leading-normal">
      <Ribbon />
      <FilterBar />
      <div className="flex h-[781px]">
        <LeftPanel />
        <MiddlePanels />
        <Splitter w="w-[5px]" />
        <Canvas />
        <Splitter w="w-[6px]" />
        <RightPanel />
      </div>
      <StatusBar />
      <Taskbar />
      {/* orange slider overlay, top right */}
      <div className="absolute right-[1px] top-[138px] flex h-[62px] w-[9px] items-end justify-center rounded-[4px] border-2 border-[#6a6d70] bg-[#d8dadc] pb-[1px]">
        <span className="h-[40px] w-[4px] bg-[#f58220]" />
      </div>
    </div>
  )
}
